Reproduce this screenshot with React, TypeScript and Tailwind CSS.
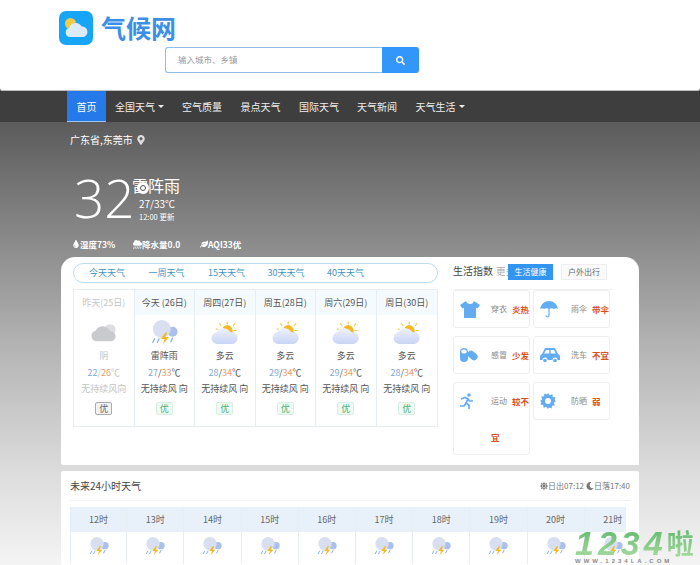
import { FaSearch, FaMapMarkerAlt, FaTint, FaCloudShowersHeavy, FaLeaf, FaSun, FaMoon } from "react-icons/fa";

const FONT = "font-['Noto_Sans_CJK_SC','Noto_Sans',sans-serif]";

const navItems = [
  { label: "全国天气", caret: true, w: "w-[67px]" },
  { label: "空气质量", w: "w-[58px]" },
  { label: "景点天气", w: "w-[59px]" },
  { label: "国际天气", w: "w-[58px]" },
  { label: "天气新闻", w: "w-[58px]" },
  { label: "天气生活", caret: true, w: "w-[68px]" },
];

const days = [
  { head: "昨天(25日)", icon: "overcast", text: "阴", low: 22, high: 26, past: true },
  { head: "今天 (26日)", icon: "storm", text: "雷阵雨", low: 27, high: 33 },
  { head: "周四(27日)", icon: "partly", text: "多云", low: 28, high: 34 },
  { head: "周五(28日)", icon: "partly", text: "多云", low: 29, high: 34 },
  { head: "周六(29日)", icon: "partly", text: "多云", low: 29, high: 34 },
  { head: "周日(30日)", icon: "partly", text: "多云", low: 28, high: 34 },
];

const hours = ["12时", "13时", "14时", "15时", "16时", "17时", "18时", "19时", "20时", "21时"];

function LogoIcon() {
  return (
    <svg viewBox="0 0 34 34" className="w-[34px] h-[34px] shrink-0">
      <rect width="34" height="34" rx="7" fill="#17a5f5" />
      <circle cx="11.5" cy="12.5" r="5.5" fill="#f7c948" />
      <path d="M11 26a4.6 4.6 0 0 1-.6-9.1 6.6 6.6 0 0 1 12.2-1.3A5.3 5.3 0 0 1 24.5 26z" fill="#dcebf5" />
    </svg>
  );
}

function WeatherIcon({ kind, size = 36 }: { kind: string; size?: number }) {
  if (kind === "overcast") {
    return (
      <svg viewBox="0 0 30 23" width={size} height={(size * 23) / 30}>
        <circle cx="23" cy="8" r="6.5" fill="#dcdde0" />
        <path d="M7 22a6.500 6.500 0 0 1-1.500-12.800A9.500 9.500 0 0 1 23 10a6 6 0 0 1 1 12z" fill="#c9cacd" />
      </svg>
    );
  }
  if (kind === "storm") {
    return (
      <svg viewBox="0 0 30 27" width={size} height={(size * 27) / 30}>
        <circle cx="24" cy="13" r="5.500" fill="#a9c1ec" />
        <circle cx="12" cy="10" r="10" fill="#d7dff0" />
        <path d="M4 21l-2 4M9 21l-2 4M24 20l-2 4" stroke="#8fb2ea" strokeWidth="1.500" strokeLinecap="round" />
        <path d="M16 14l-5 7h4l-2 6 7-8h-4l2-5z" fill="#f5b921" />
      </svg>
    );
  }
  return (
    <svg viewBox="0 0 30 26" width={size} height={(size * 26) / 30}>
      <defs>
        <linearGradient id="partly-cloud" x1="0" y1="0" x2="0" y2="1">
          <stop offset="0" stopColor="#eef2fc" />
          <stop offset="1" stopColor="#c9d4f5" />
        </linearGradient>
      </defs>
      <g stroke="#f2c53d" strokeWidth="1.200" strokeLinecap="round">
        <path d="M18 .8v2.400M9.500 3l1.600 2M26.500 3l-1.600 2M28 10.500h-2.500M7 9h-1" />
      </g>
      <circle cx="18" cy="10.500" r="6" fill="#f7b924" />
      <path d="M7 25.500a6.500 6.500 0 0 1-1-12.900A9 9 0 0 1 21.500 12a6.500 6.500 0 0 1 2.500 13.500z" fill="url(#partly-cloud)" />
      <path d="M14 8a6 6 0 0 1 9.700 5.600A6.500 6.500 0 0 0 21.500 12a9 9 0 0 0-7.500-4z" fill="#f7b924" />
    </svg>
  );
}

function Shirt() {
  return (
    <svg viewBox="0 0 20 17" className="w-5 h-[17px]" fill="#64acf2">
      <path d="M6 0 0 4l2.4 3.6L4 6.8V17h12V6.8l1.6.8L20 4l-6-4c-.6 2-1.8 3-4 3S6.600 2 6 0z" />
    </svg>
  );
}

function Umbrella() {
  return (
    <svg viewBox="0 0 18 18" className="w-[18px] h-[18px]">
      <path d="M9 1C4.500 1 1 4.200 0 9c1.200-1 2.800-1 4 0 1.200-1 3.800-1 5 0 1.200-1 3.800-1 5 0 1.200-1 2.800-1 4 0C17 4.200 13.500 1 9 1z" fill="#64acf2" />
      <path d="M9 8v7.500a1.500 1.500 0 0 1-3 0" stroke="#64acf2" strokeWidth="1.200" fill="none" />
    </svg>
  );
}

function Pills() {
  return (
    <svg viewBox="0 0 18 14" className="w-[18px] h-[14px]" fill="#64acf2">
      <rect x="0" y="0" width="8" height="14" rx="4" />
      <rect x="1.300" y="1.500" width="5.400" height="4" rx="2" fill="#fff" />
      <rect x="7" y="4" width="11" height="7" rx="3.500" transform="rotate(40 12.500 7.500)" />
    </svg>
  );
}

function Car() {
  return (
    <svg viewBox="0 0 20 15" className="w-5 h-[15px]" fill="#64acf2">
      <path d="M5 0h10l3 6c1.400.4 2 1.400 2 3v3h-2.500a2.500 2.500 0 0 0-5 0h-5a2.500 2.500 0 0 0-5 0H0V9c0-1.600.6-2.600 2-3z" />
      <path d="M6 2h3.300v3.500H4.200zM10.700 2H14l1.800 3.500h-5.100z" fill="#fff" />
      <circle cx="5" cy="12.500" r="1.800" />
      <circle cx="15" cy="12.500" r="1.800" />
    </svg>
  );
}

function Runner() {
  return (
    <svg viewBox="0 0 14 16" className="w-[14px] h-4">
      <circle cx="9" cy="2" r="1.800" fill="#64acf2" />
      <path d="M1 6l4-1.500 3 1.500-2 4 3 2v4M6 10l-2 3H0M8 6l1.500 2H13" stroke="#64acf2" strokeWidth="1.700" fill="none" />
    </svg>
  );
}

function SunGear() {
  return (
    <svg viewBox="0 0 16 16" className="w-4 h-4">
      <path d="M8 0l1.800 2.200 2.600-1 .4 2.800 2.800.4-1 2.600L16 8l-2.200 1.800 1 2.600-2.800.4-.4 2.800-2.600-1L8 16l-1.800-2.200-2.600 1-.4-2.800-2.800-.4 1-2.600L0 8l2.200-1.800-1-2.600L4 3.200l.4-2.800 2.600 1z" fill="#64acf2" />
      <circle cx="8" cy="8" r="3" fill="#fff" />
    </svg>
  );
}

function LifeCard({ icon, name, value, wrap }: { icon: React.ReactNode; name: string; value: string; wrap?: string }) {
  return (
    <div className={`w-[77px] border border-[#eeeeee] rounded-[3px] bg-white ${wrap ? "h-[73px]" : "h-[38px]"}`}>
      <div className="flex items-center h-[36px] pl-[6px]">
        <div className="w-[31px] flex justify-start">{icon}</div>
        <span className="w-[21px] text-[8px] text-[#888888] whitespace-nowrap">{name}</span>
        <span className="text-[8.500px] font-bold text-[#d9531e] whitespace-nowrap">{value}</span>
      </div>
      {wrap && <div className="pl-[37px] pt-[12px] text-[8.500px] font-bold text-[#d9531e]">{wrap}</div>}
    </div>
  );
}

export default function App() {
  return (
    <div className={`${FONT} relative w-[700px] h-[565px] overflow-hidden bg-[linear-gradient(180deg,#5b5b5b_122px,#8a8a8a_240px,#b5b5b5_350px,#dadada_465px,#f4f4f4_565px)]`}>
      {/* header */}
      <div className="h-[91px] bg-white border-b border-[#bdbdbd] rounded-b-[3px] pl-[59px] pt-[11px] relative">
        <div className="flex items-center gap-[8px]">
          <LogoIcon />
          <span className="text-[25px] leading-[34px] font-bold text-[#3d8fe6] -mt-[2px]">气候网</span>
        </div>
        <div className="flex ml-[106px] mt-[2px] w-[254px] h-[26px]">
          <div className="flex-1 border border-[#8fbfe8] border-r-0 rounded-l-[3px] pl-[12px] text-[8.500px] leading-[23px] text-[#999999]">
            输入城市、乡镇
          </div>
          <div className="w-[37px] bg-[#3296fa] rounded-r-[3px] flex items-center justify-center">
            <FaSearch size={9} color="#fff" />
          </div>
        </div>
      </div>

      {/* nav */}
      <div className="h-[31px] bg-[#3e3e3e] flex pl-[67px] text-[10px] text-[#eeeeee]">
        <div className="w-[39px] h-[31px] bg-[#2679e8] border-b border-[#9cc4f5] text-white flex items-center justify-center">首页</div>
        {navItems.map((n) => (
          <div key={n.label} className={`${n.w} flex items-center justify-center gap-[3px]`}>
            {n.label}
            {n.caret && <span className="w-0 h-0 border-x-[3px] border-x-transparent border-t-[3px] border-t-[#eeeeee]" />}
          </div>
        ))}
      </div>

      {/* location + current weather */}
      <div className="pl-[70px] pt-[11px] flex items-center gap-[3px] text-[10px] leading-[14px] text-white">
        广东省,东莞市
        <FaMapMarkerAlt size={10} color="#dddddd" />
      </div>
      <div className="relative flex pl-[74px] mt-[29px] h-[50px] text-white">
        <span className="font-['Open_Sans'] font-light text-[53px] leading-[50px] w-[58px] -mt-[3px]">32</span>
        <div className="flex flex-col items-start -mt-[1px]">
          <span className="text-[16px] leading-[20px]">雷阵雨</span>
          <span className="ml-[7px] text-[10px] leading-[14px] mt-[2px]">27/33℃</span>
          <span className="ml-[7px] text-[7.500px] leading-[11px]">12:00 更新</span>
        </div>
        <div className="absolute left-[137px] top-[6px] w-[12px] h-[12px] rounded-full bg-white flex items-center justify-center">
          <div className="w-[6px] h-[6px] rounded-full border border-[#555555]" />
        </div>
      </div>
      <div className="flex pl-[72px] mt-[11px] text-[8.500px] leading-[14px] font-bold text-white">
        <div className="w-[61px] flex items-center"><FaTint size={8} />湿度73%</div>
        <div className="w-[67px] flex items-center"><FaCloudShowersHeavy size={9} />降水量0.0</div>
        <div className="flex items-center"><FaLeaf size={8} />AQI33优</div>
      </div>

      {/* forecast card */}
      <div className="mx-[61px] mt-[6px] h-[208px] bg-white rounded-t-[14px] rounded-bl-[2px] flex pl-[12px] pt-[6px]">
        <div className="w-[365px]">
          <div className="h-[20px] border border-[#bcdcf0] rounded-full flex pl-[15px] text-[9px] leading-[18px] text-[#3f94c4]">
            {["今天天气", "一周天气", "15天天气", "30天天气", "40天天气"].map((t) => (
              <span key={t} className="w-[59.500px]">{t}</span>
            ))}
          </div>
          <div className="mt-[6px] grid grid-cols-6 h-[138px] border border-[#e6eef3]">
            {days.map((d) => (
              <div key={d.head} className={`flex flex-col items-center border-r border-[#e6eef3] last:border-r-0 ${d.past ? "text-[#c4c4c4]" : "text-[#555555]"}`}>
                <div className={`w-full h-[25px] text-[9px] leading-[25px] text-center ${d.past ? "" : "bg-[#f4fafd]"}`}>{d.head}</div>
                <div className="h-[35px] flex items-center">
                  <WeatherIcon kind={d.icon} size={d.past ? 25 : 27} />
                </div>
                <div className="text-[9px] leading-[12px]">{d.text}</div>
                <div className="text-[9px] leading-[12px] mt-[5px]">
                  <span className="text-[#7fa8d8]">{d.low}</span>/<span className="text-[#e8a065]">{d.high}</span>℃
                </div>
                <div className="text-[9px] leading-[12px] mt-[4px] whitespace-nowrap">{d.past ? "无持续风向" : "无持续风 向"}</div>
                <div className={`mt-[7px] w-[17px] h-[13px] rounded-[2px] border text-[9px] leading-[11px] text-center ${d.past ? "border-[#aaaaaa] bg-[#f2f2f2] text-[#666666]" : "border-[#d8efe3] bg-[#effaf4] text-[#4caf73]"}`}>优</div>
              </div>
            ))}
          </div>
        </div>

        <div className="ml-[15px] w-[160px]">
          <div className="h-[27px] flex items-start border-b border-[#f3f3f3] relative">
            <span className="text-[10px] leading-[16px] text-[#444444]">生活指数</span>
            <span className="ml-[3px] text-[9.500px] leading-[16px] text-[#aaaaaa] whitespace-nowrap">更多</span>
            <span className="absolute left-[55px] top-[1px] w-[45px] h-[16px] bg-[#3296f0] text-white text-[8px] leading-[16px] text-center">生活健康</span>
            <span className="absolute left-[108px] top-[1px] w-[46px] h-[16px] bg-[#fafafa] border border-[#eeeeee] text-[#666666] text-[8px] leading-[14px] text-center">户外出行</span>
          </div>
          <div className="grid grid-cols-[77px_77px] gap-x-[3px] gap-y-[8px] items-start">
            <LifeCard icon={<Shirt />} name="穿衣" value="炎热" />
            <LifeCard icon={<Umbrella />} name="雨伞" value="带伞" />
            <LifeCard icon={<Pills />} name="感冒" value="少发" />
            <LifeCard icon={<Car />} name="洗车" value="不宜" />
            <LifeCard icon={<Runner />} name="运动" value="较不" wrap="宜" />
            <LifeCard icon={<SunGear />} name="防晒" value="弱" />
          </div>
        </div>
      </div>

      {/* 24 hours */}
      <div className="mx-[61px] mt-[6px] h-[100px] bg-white rounded-t-[2px] px-[9px]">
        <div className="h-[30px] flex items-center justify-between border-b border-[#f3f3f3] text-[#444444]">
          <span className="text-[10px]">未来24小时天气</span>
          <span className="flex items-center text-[8px] text-[#777777]">
            <FaSun size={8} />日出07:12
            <FaMoon size={8} className="ml-[2px]" />日落17:40
          </span>
        </div>
        <div className="mt-[6px] w-[556px] overflow-hidden">
          <div className="grid grid-cols-[repeat(10,57.2px)] w-[572px]">
            {hours.map((h) => (
              <div key={h} className="border-r border-[#e6eef3] first:border-l flex flex-col items-center">
                <div className="w-full h-[25px] bg-[#e8f1fa] text-[9px] leading-[25px] text-center text-[#666666]">{h}</div>
                <div className="h-[32px] pt-[5px]"><WeatherIcon kind="storm" size={20} /></div>
              </div>
            ))}
          </div>
        </div>
      </div>

      {/* watermark */}
      <div className="absolute left-[575px] top-[528px] w-[125px] flex flex-col items-start">
        <div className="flex items-center h-[30px] whitespace-nowrap">
          <span className="font-['Liberation_Sans'] italic font-bold text-[34px] leading-[30px] tracking-[4px] bg-gradient-to-b from-[#5fb96d] to-[#a6dba0] bg-clip-text text-transparent">1234</span>
          <span className="font-['Noto_Sans_CJK_SC'] font-bold text-[27px] leading-[30px] bg-gradient-to-b from-[#5fb96d] to-[#a6dba0] bg-clip-text text-transparent">啦</span>
        </div>
        <span className="font-['Liberation_Sans'] font-bold text-[6px] leading-[7px] tracking-[3px] text-[#8a8a8a] whitespace-nowrap">WWW.1234LA.COM</span>
      </div>
    </div>
  );
}
